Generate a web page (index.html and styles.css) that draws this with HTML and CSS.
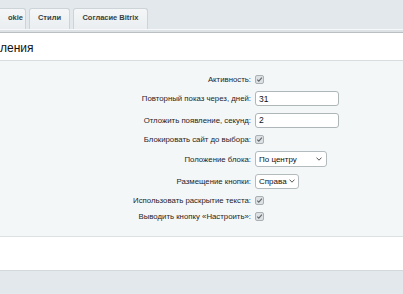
FILE: index.html
```html
<!DOCTYPE html>
<html lang="ru">
<head>
  <meta charset="UTF-8" />
  <title>Настройки</title>
  <link rel="stylesheet" href="styles.css">
</head>
<body>

  <div class="tabs">
    <div class="tab tab-cut">okie</div>
    <div class="tab tab-styles">Стили</div>
    <div class="tab tab-consent">Согласие Bitrix</div>
  </div>
  <div class="tabs-line"></div>

  <div class="panel-head">ления</div>

  <div class="panel-body">
    <div class="form">
      <div class="label">Активность:</div>
      <div class="field"><span class="check"><svg viewBox="0 0 9 9" width="9" height="9"><path d="M2.2 4.6 L3.8 6.2 L6.9 2.6" fill="none" stroke="#5f686d" stroke-width="1.1"/></svg></span></div>

      <div class="label">Повторный показ через, дней:</div>
      <div class="field"><input class="text wide" type="text" value="31"></div>

      <div class="label">Отложить появление, секунд:</div>
      <div class="field"><input class="text wide" type="text" value="2"></div>

      <div class="label">Блокировать сайт до выбора:</div>
      <div class="field"><span class="check"><svg viewBox="0 0 9 9" width="9" height="9"><path d="M2.2 4.6 L3.8 6.2 L6.9 2.6" fill="none" stroke="#5f686d" stroke-width="1.1"/></svg></span></div>

      <div class="label">Положение блока:</div>
      <div class="field"><div class="select sel-pos"><span>По центру</span><svg viewBox="0 0 6 4" width="6" height="4"><path d="M0.5 0.6 L3 3.2 L5.5 0.6" fill="none" stroke="#444" stroke-width="0.9"/></svg></div></div>

      <div class="label">Размещение кнопки:</div>
      <div class="field"><div class="select sel-btn"><span>Справа</span><svg viewBox="0 0 6 4" width="6" height="4"><path d="M0.5 0.6 L3 3.2 L5.5 0.6" fill="none" stroke="#444" stroke-width="0.9"/></svg></div></div>

      <div class="label">Использовать раскрытие текста:</div>
      <div class="field"><span class="check"><svg viewBox="0 0 9 9" width="9" height="9"><path d="M2.2 4.6 L3.8 6.2 L6.9 2.6" fill="none" stroke="#5f686d" stroke-width="1.1"/></svg></span></div>

      <div class="label">Выводить кнопку «Настроить»:</div>
      <div class="field"><span class="check"><svg viewBox="0 0 9 9" width="9" height="9"><path d="M2.2 4.6 L3.8 6.2 L6.9 2.6" fill="none" stroke="#5f686d" stroke-width="1.1"/></svg></span></div>
    </div>
  </div>

  <div class="panel-foot"></div>

</body>
</html>
```

FILE: styles.css
```css
html, body {
  margin: 0;
  padding: 0;
  background: #e2e8eb;
  font-family: "Liberation Sans", Arial, sans-serif;
  color: #1e1e1e;
  height: 100vh;
  overflow: hidden;
}

.tabs {
  display: flex;
  gap: 3px;
  padding-top: 8px;
  height: 21px;
}

.tab {
  box-sizing: border-box;
  height: 21px;
  border: 1px solid #cdd4d7;
  border-bottom: none;
  border-radius: 3px 3px 0 0;
  background: linear-gradient(#f4f6f7, #eaeef0);
  font-size: 7.5px;
  font-weight: bold;
  color: #3a3f42;
  line-height: 18px;
  text-align: center;
}

.tab-cut {
  width: 26px;
  border-left: none;
  border-radius: 0 3px 0 0;
  text-align: right;
  padding-right: 2px;
}

.tab-styles {
  width: 41px;
}

.tab-consent {
  width: 75px;
}

.tabs-line {
  height: 2px;
  border-top: 1px solid #f6f8f9;
  border-bottom: 1px solid #b9bfc2;
  background: #dde2e4;
}

.panel-head {
  height: 28px;
  line-height: 28px;
  background: #fff;
  border-bottom: 1px solid #d8dddf;
  font-size: 12px;
  color: #111;
  padding-top: 1px;
  box-sizing: border-box;
}

.panel-body {
  background: #f4f7f8;
  border-bottom: 1px solid #dce2e4;
  padding: 9px 0 12px;
}

.form {
  display: grid;
  grid-template-columns: 251px auto;
  grid-template-rows: 18px 21px 22px 17px 22px 22px 17px 15px;
  column-gap: 4px;
}

.label {
  display: flex;
  align-items: center;
  justify-content: flex-end;
  font-size: 7.8px;
  color: #1e1e1e;
}

.field {
  display: flex;
  align-items: center;
}

.check {
  box-sizing: border-box;
  width: 9px;
  height: 9px;
  border: 1px solid #a9b1b5;
  border-radius: 2px;
  background: #dde1e3;
  display: flex;
  align-items: center;
  justify-content: center;
}

.check svg {
  display: block;
  flex: none;
}

.text {
  box-sizing: border-box;
  height: 15px;
  margin: 0;
  padding: 0 3px;
  border: 1px solid #aeb6ba;
  border-radius: 3px;
  background: #fff;
  font-family: inherit;
  font-size: 8.5px;
  color: #111;
  outline: none;
}

.wide {
  width: 84px;
}

.select {
  box-sizing: border-box;
  height: 16px;
  padding: 0 4px 0 3px;
  border: 1px solid #b3bbbf;
  border-radius: 3px;
  background: #fff;
  display: flex;
  align-items: center;
  justify-content: space-between;
  font-size: 8px;
  color: #111;
}

.select svg {
  display: block;
  flex: none;
}

.sel-pos {
  width: 72px;
}

.sel-btn {
  width: 44px;
  height: 15px;
  padding-right: 3px;
}

.panel-foot {
  height: 33px;
  background: #fff;
  border-bottom: 1px solid #d3d9db;
}
```
